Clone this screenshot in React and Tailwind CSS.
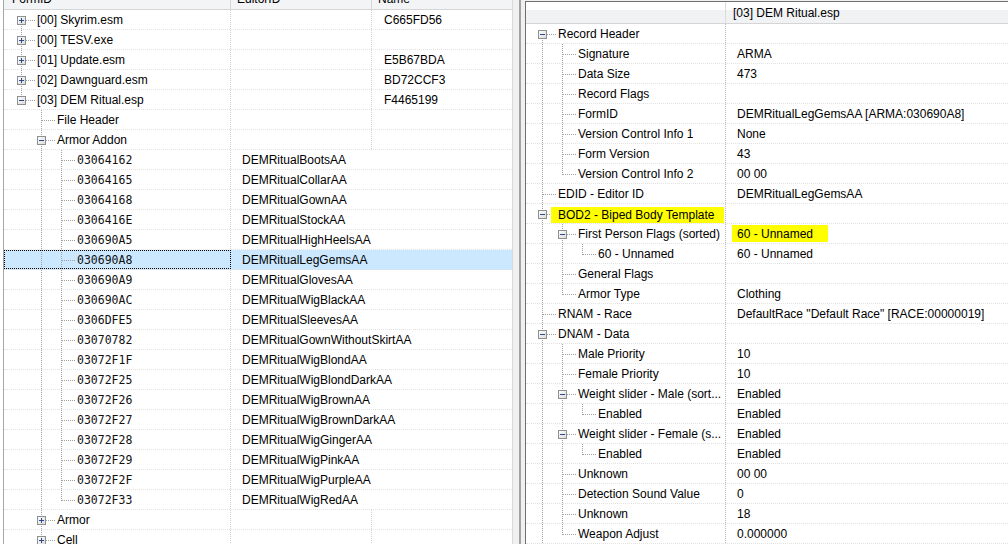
import React from "react";

// xEdit-style split view: navigation tree on the left, record view on the right

const LINE = "#a0a0a0";
const FONT = { fontFamily: '"Liberation Sans", Arial, sans-serif' };
const MONO = { fontFamily: '"DejaVu Sans Mono", "Liberation Mono", monospace' };

function Tree({ guides = [], conn = "mid", box, id }) {
  const n = guides.length;
  const w = (n + 1) * 20 + 6;
  const cx = n * 20 + 10.5;
  return (
    <svg width={w} height="20" className="block shrink-0">
      <defs>
        <linearGradient id={`bx-${id}`} x1="0" y1="0" x2="1" y2="1">
          <stop offset="0" stopColor="#ffffff" />
          <stop offset="1" stopColor="#d9d9d9" />
        </linearGradient>
      </defs>
      {guides.map((g, i) =>
        g === "line" ? (
          <line key={i} x1={i * 20 + 10.5} y1="0" x2={i * 20 + 10.5} y2="20" stroke={LINE} strokeDasharray="1 1" />
        ) : null
      )}
      <line
        x1={cx}
        y1={conn === "first" ? 10 : 0}
        x2={cx}
        y2={conn === "last" ? 11 : 20}
        stroke={LINE}
        strokeDasharray="1 1"
      />
      <line x1={n * 20 + 11} y1="10.5" x2={n * 20 + 24} y2="10.5" stroke={LINE} strokeDasharray="1 1" />
      {box && (
        <g>
          <rect x={cx - 4} y="6.5" width="8" height="8" fill={`url(#bx-${id})`} stroke="#8e8f8f" />
          <line x1={n * 20 + 8} y1="10.5" x2={n * 20 + 13} y2="10.5" stroke="#2d4a8a" />
          {box === "+" && <line x1={cx} y1="8" x2={cx} y2="13" stroke="#2d4a8a" />}
        </g>
      )}
    </svg>
  );
}

const recs = [
  ["03064162", "DEMRitualBootsAA"],
  ["03064165", "DEMRitualCollarAA"],
  ["03064168", "DEMRitualGownAA"],
  ["0306416E", "DEMRitualStockAA"],
  ["030690A5", "DEMRitualHighHeelsAA"],
  ["030690A8", "DEMRitualLegGemsAA"],
  ["030690A9", "DEMRitualGlovesAA"],
  ["030690AC", "DEMRitualWigBlackAA"],
  ["0306DFE5", "DEMRitualSleevesAA"],
  ["03070782", "DEMRitualGownWithoutSkirtAA"],
  ["03072F1F", "DEMRitualWigBlondAA"],
  ["03072F25", "DEMRitualWigBlondDarkAA"],
  ["03072F26", "DEMRitualWigBrownAA"],
  ["03072F27", "DEMRitualWigBrownDarkAA"],
  ["03072F28", "DEMRitualWigGingerAA"],
  ["03072F29", "DEMRitualWigPinkAA"],
  ["03072F2F", "DEMRitualWigPurpleAA"],
  ["03072F33", "DEMRitualWigRedAA"],
];

const leftRows = [
  { t: "[00] Skyrim.esm", g: [], c: "first", box: "+", name: "C665FD56" },
  { t: "[00] TESV.exe", g: [], c: "mid", box: "+" },
  { t: "[01] Update.esm", g: [], c: "mid", box: "+", name: "E5B67BDA" },
  { t: "[02] Dawnguard.esm", g: [], c: "mid", box: "+", name: "BD72CCF3" },
  { t: "[03] DEM Ritual.esp", g: [], c: "last", box: "-", name: "F4465199" },
  { t: "File Header", g: ["none"], c: "mid" },
  { t: "Armor Addon", g: ["none"], c: "mid", box: "-" },
  ...recs.map(([id, ed], i) => ({
    t: id,
    ed,
    mono: true,
    g: ["none", "line"],
    c: i === recs.length - 1 ? "last" : "mid",
    sel: id === "030690A8",
  })),
  { t: "Armor", g: ["none"], c: "mid", box: "+" },
  { t: "Cell", g: ["none"], c: "mid", box: "+" },
];

const L = ["line"];
const LL = ["line", "line"];
const rightRows = [
  { t: "Record Header", g: [], c: "first", box: "-" },
  { t: "Signature", g: L, v: "ARMA" },
  { t: "Data Size", g: L, v: "473" },
  { t: "Record Flags", g: L },
  { t: "FormID", g: L, v: "DEMRitualLegGemsAA [ARMA:030690A8]" },
  { t: "Version Control Info 1", g: L, v: "None" },
  { t: "Form Version", g: L, v: "43" },
  { t: "Version Control Info 2", g: L, c: "last", v: "00 00" },
  { t: "EDID - Editor ID", g: [], v: "DEMRitualLegGemsAA" },
  { t: "BOD2 - Biped Body Template", g: [], box: "-", hl: true },
  { t: "First Person Flags (sorted)", g: L, box: "-", v: "60 - Unnamed", vhl: true },
  { t: "60 - Unnamed", g: LL, c: "last", v: "60 - Unnamed" },
  { t: "General Flags", g: L },
  { t: "Armor Type", g: L, c: "last", v: "Clothing" },
  { t: "RNAM - Race", g: [], v: 'DefaultRace "Default Race" [RACE:00000019]' },
  { t: "DNAM - Data", g: [], box: "-" },
  { t: "Male Priority", g: L, v: "10" },
  { t: "Female Priority", g: L, v: "10" },
  { t: "Weight slider - Male (sort...", g: L, box: "-", v: "Enabled" },
  { t: "Enabled", g: LL, c: "last", v: "Enabled" },
  { t: "Weight slider - Female (s...", g: L, box: "-", v: "Enabled" },
  { t: "Enabled", g: LL, c: "last", v: "Enabled" },
  { t: "Unknown", g: L, v: "00 00" },
  { t: "Detection Sound Value", g: L, v: "0" },
  { t: "Unknown", g: L, v: "18" },
  { t: "Weapon Adjust", g: L, c: "last", v: "0.000000" },
];

function LeftPane() {
  return (
    <div className="w-[510px] shrink-0 h-full bg-white border-l border-[#a7a7a7] border-r border-r-[#d9d9d9] overflow-hidden">
      <div className="h-[10px] overflow-hidden border-b border-[#d5d5d5] bg-[#f3f4f6]">
        <div className="mt-[-11px] h-[20px] flex text-[12px] leading-[20px] text-black">
          <div className="w-[227px] shrink-0 pl-[8px] border-r border-[#d5d5d5]">FormID</div>
          <div className="w-[141px] shrink-0 pl-[6px] border-r border-[#d5d5d5]">EditorID</div>
          <div className="flex-1 pl-[6px]">Name</div>
        </div>
      </div>
      {leftRows.map((r, i) => (
        <div
          key={i}
          className={`h-[20px] flex border-b border-dotted border-[#e2e2e2] text-[12px] leading-[21px] text-black ${
            r.sel ? "bg-[#cce8ff]" : ""
          }`}
        >
          <div
            className={`w-[227px] shrink-0 flex pl-[7px] border-r border-dotted border-[#cfcfcf] whitespace-nowrap overflow-hidden ${
              r.sel ? "outline outline-1 outline-dotted outline-black -outline-offset-1" : ""
            }`}
          >
            <Tree guides={r.g} conn={r.c} box={r.box} id={`l${i}`} />
            <span className={r.mono ? "text-[11.5px] text-[#111]" : ""} style={r.mono ? MONO : undefined}>
              {r.t}
            </span>
          </div>
          <div
            className={`w-[141px] shrink-0 pl-[11px] whitespace-nowrap ${
              r.ed ? "" : "border-r border-dotted border-[#cfcfcf]"
            }`}
          >
            {r.ed || ""}
          </div>
          <div className="flex-1 pl-[12px] whitespace-nowrap">{r.name || ""}</div>
        </div>
      ))}
    </div>
  );
}

function RightPane() {
  return (
    <div className="flex-1 h-full mt-[1px] bg-white border-l border-t border-[#6f6f6f] overflow-hidden">
      <div className="h-[22px] flex border-b border-[#d5d5d5] bg-gradient-to-b from-white from-40% to-[#f1f2f4] to-40% text-[12px] leading-[22px] text-black">
        <div className="w-[200px] shrink-0 border-r border-[#dcdcdc]" />
        <div className="flex-1 pl-[7px] whitespace-nowrap">[03] DEM Ritual.esp</div>
      </div>
      {rightRows.map((r, i) => (
        <div key={i} className="h-[20px] flex border-b border-dotted border-[#e2e2e2] text-[12px] leading-[21px] text-black">
          <div className="w-[200px] shrink-0 flex pl-[6px] border-r border-dotted border-[#b9b9b9] whitespace-nowrap overflow-hidden">
            <Tree guides={r.g} conn={r.c || "mid"} box={r.box} id={`r${i}`} />
            {r.hl ? (
              <span className="ml-[-7px] pl-[7px] pr-[9px] mt-[3px] h-[17px] leading-[16px] bg-[#ffff00]">{r.t}</span>
            ) : (
              <span>{r.t}</span>
            )}
          </div>
          <div className="flex-1 pl-[11px] whitespace-nowrap">
            {r.vhl ? (
              <span className="inline-block ml-[-5px] pl-[5px] pr-[15px] mt-[1px] h-[17px] leading-[18px] bg-[#ffff00]">
                {r.v}
              </span>
            ) : (
              r.v || ""
            )}
          </div>
        </div>
      ))}
    </div>
  );
}

export default function App() {
  return (
    <div className="w-[1008px] h-[544px] flex overflow-hidden bg-[#f0f0f0]" style={FONT}>
      <div className="w-[3px] shrink-0 bg-white" />
      <LeftPane />
      <div className="w-[6px] shrink-0" />
      <div className="w-[2px] shrink-0 bg-[#a3a3a3]" />
      <div className="w-[4px] shrink-0" />
      <RightPane />
    </div>
  );
}
